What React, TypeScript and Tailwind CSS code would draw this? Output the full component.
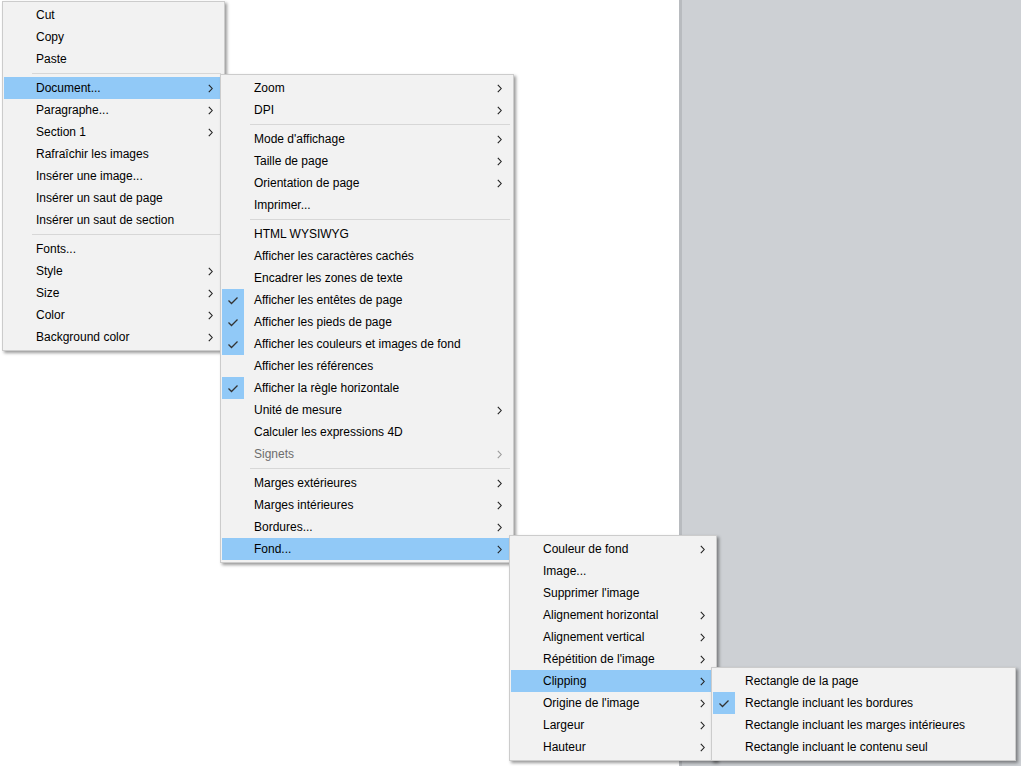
import React from 'react';

type Item = {
    label?: string;
    sep?: boolean;
    sub?: boolean;
    checked?: boolean;
    active?: boolean;
    disabled?: boolean;
};

const mainMenu: Item[] = [
    { label: 'Cut' },
    { label: 'Copy' },
    { label: 'Paste' },
    { sep: true },
    { label: 'Document...', sub: true, active: true },
    { label: 'Paragraphe...', sub: true },
    { label: 'Section 1', sub: true },
    { label: 'Rafraîchir les images' },
    { label: 'Insérer une image...' },
    { label: 'Insérer un saut de page' },
    { label: 'Insérer un saut de section' },
    { sep: true },
    { label: 'Fonts...' },
    { label: 'Style', sub: true },
    { label: 'Size', sub: true },
    { label: 'Color', sub: true },
    { label: 'Background color', sub: true },
];

const documentMenu: Item[] = [
    { label: 'Zoom', sub: true },
    { label: 'DPI', sub: true },
    { sep: true },
    { label: "Mode d'affichage", sub: true },
    { label: 'Taille de page', sub: true },
    { label: 'Orientation de page', sub: true },
    { label: 'Imprimer...' },
    { sep: true },
    { label: 'HTML WYSIWYG' },
    { label: 'Afficher les caractères cachés' },
    { label: 'Encadrer les zones de texte' },
    { label: 'Afficher les entêtes de page', checked: true },
    { label: 'Afficher les pieds de page', checked: true },
    { label: 'Afficher les couleurs et images de fond', checked: true },
    { label: 'Afficher les références' },
    { label: 'Afficher la règle horizontale', checked: true },
    { label: 'Unité de mesure', sub: true },
    { label: 'Calculer les expressions 4D' },
    { label: 'Signets', sub: true, disabled: true },
    { sep: true },
    { label: 'Marges extérieures', sub: true },
    { label: 'Marges intérieures', sub: true },
    { label: 'Bordures...', sub: true },
    { label: 'Fond...', sub: true, active: true },
];

const fondMenu: Item[] = [
    { label: 'Couleur de fond', sub: true },
    { label: 'Image...' },
    { label: "Supprimer l'image" },
    { label: 'Alignement horizontal', sub: true },
    { label: 'Alignement vertical', sub: true },
    { label: "Répétition de l'image", sub: true },
    { label: 'Clipping', sub: true, active: true },
    { label: "Origine de l'image", sub: true },
    { label: 'Largeur', sub: true },
    { label: 'Hauteur', sub: true },
];

const clippingMenu: Item[] = [
    { label: 'Rectangle de la page' },
    { label: 'Rectangle incluant les bordures', checked: true },
    { label: 'Rectangle incluant les marges intérieures' },
    { label: 'Rectangle incluant le contenu seul' },
];

const Check: React.FC = () => (
    <svg width="22" height="22" viewBox="0 0 22 22">
        <path d="M6.5 11.5 L9.5 14.5 L15.5 8.5" fill="none" stroke="#333" strokeWidth="1.3" />
    </svg>
);

const Chevron: React.FC<{ disabled?: boolean }> = ({ disabled }) => (
    <svg width="5" height="9" viewBox="0 0 5 9">
        <path d="M0.8 0.8 L4.2 4.5 L0.8 8.2" fill="none" stroke={disabled ? '#9a9a9a' : '#222'} strokeWidth="1.1" />
    </svg>
);

const Menu: React.FC<{ items: Item[]; className: string }> = ({ items, className }) => {
    return (
        <div className={'absolute flex flex-col border border-[#cccccc] bg-[#f2f2f2] px-px py-[2px] shadow-[2px_2px_3px_rgba(0,0,0,0.4)] ' + className}>
            {items.map((it, i) =>
                it.sep ? (
                    <div key={i} className="flex h-[7px] items-center pl-[28px] pr-[2px]">
                        <div className="h-px w-full bg-[#d7d7d7]" />
                    </div>
                ) : (
                    <div key={i} className={'flex h-[22px] items-center ' + (it.active ? 'bg-[#91c9f7]' : '')}>
                        <div className={'flex h-[22px] w-[22px] shrink-0 items-center justify-center ' + (it.checked ? 'bg-[#91c9f7]' : '')}>
                            {it.checked && <Check />}
                        </div>
                        <span className={'ml-[10px] flex-1 whitespace-nowrap ' + (it.disabled ? 'text-[#6d6d6d]' : 'text-black')}>
                            {it.label}
                        </span>
                        {it.sub && (
                            <div className="mr-[10px] flex w-[5px] items-center">
                                <Chevron disabled={it.disabled} />
                            </div>
                        )}
                    </div>
                )
            )}
        </div>
    );
};

const App: React.FC = () => {
    return (
        <div className="relative flex h-[766px] w-[1021px] overflow-hidden text-[12px] font-['Liberation_Sans',Arial,sans-serif]">
            <div className="h-full w-[679px] bg-white" />
            <div className="h-full flex-1 border-l-[3px] border-[#b8bbbf] bg-[#cdd0d4]" />

            <Menu items={mainMenu} className="left-[2px] top-[1px] w-[223px]" />
            <Menu items={documentMenu} className="left-[220px] top-[74px] w-[294px]" />
            <Menu items={fondMenu} className="left-[509px] top-[535px] w-[208px]" />
            <Menu items={clippingMenu} className="left-[711px] top-[667px] w-[305px]" />
        </div>
    );
};

export default App;
